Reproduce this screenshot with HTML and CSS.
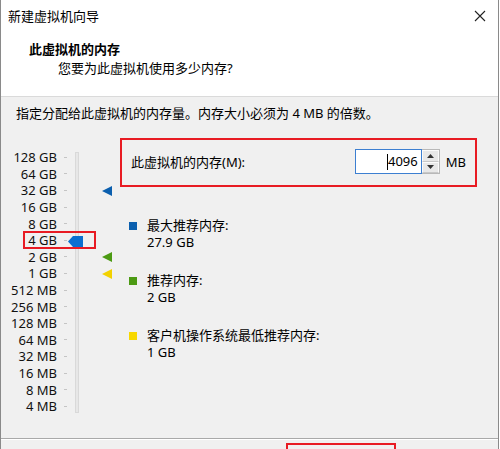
FILE: index.html
```html
<!DOCTYPE html>
<html lang="zh-CN">
<head>
<meta charset="utf-8">
<title>新建虚拟机向导</title>
<link rel="stylesheet" href="styles.css">
</head>
<body>
<div class="window">
  <div class="titlebar">
    <span class="title">新建虚拟机向导</span>
    <svg class="close" width="12" height="12" viewBox="0 0 12 12"><path d="M1 1L11 11M11 1L1 11" stroke="#222" stroke-width="1.1" fill="none"/></svg>
  </div>
  <div class="header">
    <div class="h-title">此虚拟机的内存</div>
    <div class="h-sub">您要为此虚拟机使用多少内存?</div>
  </div>
  <div class="content">
    <div class="desc">指定分配给此虚拟机的内存量。内存大小必须为 4 MB 的倍数。</div>
    <div class="main">
      <div class="slider">
        <div class="labels">
          <div class="row"><span class="lbl">128 GB</span><span class="tick"></span></div>
          <div class="row"><span class="lbl">64 GB</span><span class="tick"></span></div>
          <div class="row"><span class="lbl">32 GB</span><span class="tick"></span></div>
          <div class="row"><span class="lbl">16 GB</span><span class="tick"></span></div>
          <div class="row"><span class="lbl">8 GB</span><span class="tick"></span></div>
          <div class="row"><span class="lbl">4 GB</span><span class="tick"></span></div>
          <div class="row"><span class="lbl">2 GB</span><span class="tick"></span></div>
          <div class="row"><span class="lbl">1 GB</span><span class="tick"></span></div>
          <div class="row"><span class="lbl">512 MB</span><span class="tick"></span></div>
          <div class="row"><span class="lbl">256 MB</span><span class="tick"></span></div>
          <div class="row"><span class="lbl">128 MB</span><span class="tick"></span></div>
          <div class="row"><span class="lbl">64 MB</span><span class="tick"></span></div>
          <div class="row"><span class="lbl">32 MB</span><span class="tick"></span></div>
          <div class="row"><span class="lbl">16 MB</span><span class="tick"></span></div>
          <div class="row"><span class="lbl">8 MB</span><span class="tick"></span></div>
          <div class="row"><span class="lbl">4 MB</span><span class="tick"></span></div>
        </div>
        <div class="track"></div>
        <svg class="thumb" width="15" height="11" viewBox="0 0 15 11"><path d="M0 5.5L5 0H15V11H5Z" fill="#0a6fd0"/></svg>
        <div class="hl-box"></div>
        <svg class="mark mark-max" width="10" height="10" viewBox="0 0 10 10"><path d="M0 5L10 0V10Z" fill="#0b5fae"/></svg>
        <svg class="mark mark-rec" width="10" height="10" viewBox="0 0 10 10"><path d="M0 5L10 0V10Z" fill="#4c9a13"/></svg>
        <svg class="mark mark-min" width="10" height="10" viewBox="0 0 10 10"><path d="M0 5L10 0V10Z" fill="#f2d100"/></svg>
      </div>
      <div class="right">
        <div class="mem-box">
          <span class="mem-label">此虚拟机的内存(M):</span>
          <div class="mem-ctrl">
            <div class="input"><span class="caret"></span>4096</div>
            <div class="spin">
              <div class="spin-btn"><svg width="7" height="4" viewBox="0 0 7 4"><path d="M3.5 0L7 4H0Z" fill="#333"/></svg></div>
              <div class="spin-btn"><svg width="7" height="4" viewBox="0 0 7 4"><path d="M0 0H7L3.5 4Z" fill="#333"/></svg></div>
            </div>
            <span class="unit">MB</span>
          </div>
        </div>
        <div class="legend">
          <div class="item"><span class="sq sq-blue"></span><div class="txt"><div>最大推荐内存:</div><div>27.9 GB</div></div></div>
          <div class="item"><span class="sq sq-green"></span><div class="txt"><div>推荐内存:</div><div>2 GB</div></div></div>
          <div class="item"><span class="sq sq-yellow"></span><div class="txt"><div>客户机操作系统最低推荐内存:</div><div>1 GB</div></div></div>
        </div>
      </div>
    </div>
  </div>
  <div class="footer">
    <div class="footer-box"></div>
  </div>
</div>
</body>
</html>
```
FILE: styles.css
```css
* { box-sizing: border-box; }
html, body { margin: 0; padding: 0; background: #ffffff; }
body {
  font-family: "Noto Sans", "Noto Sans CJK SC", sans-serif;
  font-size: 13px;
  color: #000;
  width: 500px;
  height: 449px;
  overflow: hidden;
}
.window {
  width: 499px;
  height: 449px;
  border-left: 1px solid #8a8a8a;
  border-right: 1px solid #8a8a8a;
  display: flex;
  flex-direction: column;
}
.titlebar {
  height: 33px;
  background: #fff;
  display: flex;
  align-items: center;
  justify-content: space-between;
  padding: 0 12px 2px 7px;
}
.title { font-size: 13px; line-height: 16px; }
.close { display: block; }
.header {
  height: 64px;
  background: #fff;
  border-bottom: 1px solid #dadada;
  padding-top: 8px;
}
.h-title {
  font-weight: bold;
  margin-left: 28px;
  line-height: 17px;
}
.h-sub {
  margin-left: 57px;
  margin-top: 2px;
  line-height: 17px;
}
.content {
  flex: 1;
  background: #f0f0f0;
  border-bottom: 1px solid #a9a9a9;
  padding-top: 8px;
}
.desc {
  margin-left: 15px;
  line-height: 17px;
}
.main {
  display: flex;
  margin-top: 16px;
}
.slider {
  position: relative;
  width: 119px;
  height: 280px;
  padding-top: 11px;
}
.labels {
  display: flex;
  flex-direction: column;
}
.row {
  height: 16.6px;
  display: flex;
  align-items: center;
  line-height: 16px;
}
.lbl {
  width: 56px;
  text-align: right;
  color: #111;
}
.tick {
  width: 3px;
  height: 1px;
  background: #c4c4c4;
  margin-left: 7px;
}
.track {
  position: absolute;
  left: 74px;
  top: 14px;
  width: 4px;
  height: 261px;
  background: #e7e7e7;
  border: 1px solid #d9d9d9;
}
.thumb {
  position: absolute;
  left: 67px;
  top: 98px;
  display: block;
}
.hl-box {
  position: absolute;
  left: 22px;
  top: 93px;
  width: 73px;
  height: 18px;
  border: 2px solid #e81b23;
}
.mark { position: absolute; left: 101px; display: block; }
.mark-max { top: 48px; }
.mark-rec { top: 114px; }
.mark-min { top: 131px; }
.right {
  display: flex;
  flex-direction: column;
}
.mem-box {
  width: 357px;
  height: 49px;
  border: 2px solid #e81b23;
  display: flex;
  align-items: center;
  justify-content: space-between;
  padding: 0 9px 2px 9px;
}
.mem-ctrl {
  display: flex;
  align-items: center;
}
.input {
  width: 67px;
  height: 25px;
  background: #fff;
  border: 1px solid #3c7fd1;
  text-align: right;
  padding-right: 3px;
  line-height: 23px;
  position: relative;
}
.caret {
  display: inline-block;
  width: 1px;
  height: 16px;
  background: #000;
  vertical-align: middle;
  margin-right: 0;
  position: relative;
  top: -1px;
}
.spin {
  width: 18px;
  height: 25px;
  display: flex;
  flex-direction: column;
  border: 1px solid #b8b8b8;
  border-left: none;
  background: #e8e8e8;
}
.spin-btn {
  flex: 1;
  display: flex;
  align-items: center;
  justify-content: center;
  border: 1px solid #fbfbfb;
  border-bottom-color: #c8c8c8;
}
.spin-btn svg { display: block; }
.unit { margin-left: 6px; }
.legend {
  margin-left: 9px;
  margin-top: 30px;
  display: flex;
  flex-direction: column;
  gap: 21px;
}
.item {
  display: flex;
  gap: 10px;
}
.sq {
  width: 8px;
  height: 8px;
  margin-top: 5px;
  flex: none;
}
.sq-blue { background: #0b5fae; }
.sq-green { background: #4c9a13; }
.sq-yellow { background: #f7d800; }
.txt { line-height: 17px; }
.footer {
  height: 10px;
  background: #f0f0f0;
  border-top: 1px solid #ffffff;
  position: relative;
}
.footer-box {
  position: absolute;
  left: 285px;
  top: 3px;
  width: 110px;
  height: 20px;
  border: 2px solid #e81b23;
}
```
